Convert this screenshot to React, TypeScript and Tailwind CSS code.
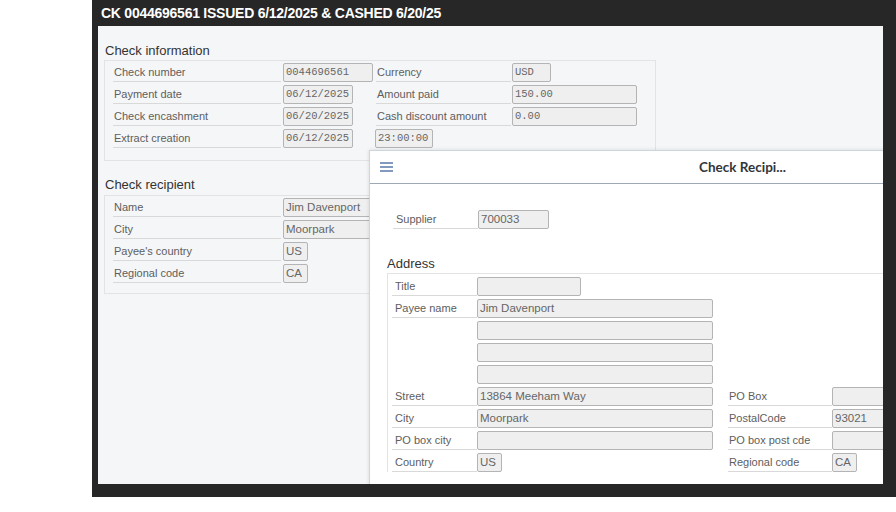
const Field = ({ v = "", w, mono = false }: { v?: string; w: string; mono?: boolean }) => (
  <div
    className={`${w} h-[19px] shrink-0 flex items-center px-[2px] border border-[#b4b4b4] rounded-[2px] bg-[#efefef] text-[#666] overflow-hidden whitespace-nowrap ${
      mono ? "font-['Liberation_Mono',monospace] text-[10.5px]" : "text-[11.5px]"
    }`}
  >
    {v}
  </div>
);

const Label = ({ t = "", w, line = true, pad = "pl-[1px]" }: { t?: string; w: string; line?: boolean; pad?: string }) => (
  <div
    className={`${w} ${pad} h-[19px] shrink-0 flex items-center text-[11px] text-[#5e5e5e] whitespace-nowrap ${
      line ? "border-b border-[#d9d9d9]" : ""
    }`}
  >
    {t}
  </div>
);

const info = [
  { l: "Check number", v: "0044696561", w: "w-[90px]", l2: "Currency", v2: "USD", w2: "w-[39px]" },
  { l: "Payment date", v: "06/12/2025", w: "w-[70px]", l2: "Amount paid", v2: "150.00", w2: "w-[125px]" },
  { l: "Check encashment", v: "06/20/2025", w: "w-[70px]", l2: "Cash discount amount", v2: "0.00", w2: "w-[125px]" },
  { l: "Extract creation", v: "06/12/2025", w: "w-[70px]", l2: "", v2: "", w2: "" },
];

const recipient = [
  { l: "Name", v: "Jim Davenport", w: "w-[110px]" },
  { l: "City", v: "Moorpark", w: "w-[110px]" },
  { l: "Payee's country", v: "US", w: "w-[25px]" },
  { l: "Regional code", v: "CA", w: "w-[25px]" },
];

const address = [
  { l: "Title", v: "", w: "w-[104px]", line: true },
  { l: "Payee name", v: "Jim Davenport", w: "w-[236px]", line: true },
  { l: "", v: "", w: "w-[236px]", line: false },
  { l: "", v: "", w: "w-[236px]", line: false },
  { l: "", v: "", w: "w-[236px]", line: false },
  { l: "Street", v: "13864 Meeham Way", w: "w-[236px]", line: true, r: "PO Box", rv: "", rw: "w-[60px]" },
  { l: "City", v: "Moorpark", w: "w-[236px]", line: true, r: "PostalCode", rv: "93021", rw: "w-[60px]" },
  { l: "PO box city", v: "", w: "w-[236px]", line: true, r: "PO box post cde", rv: "", rw: "w-[60px]" },
  { l: "Country", v: "US", w: "w-[25px]", line: true, r: "Regional code", rv: "CA", rw: "w-[25px]" },
];

export default function App() {
  return (
    <div className="w-[896px] h-[512px] bg-white font-['Liberation_Sans',Arial,sans-serif]">
      <div className="ml-[92px] w-[804px] h-[497px] bg-[#272727] flex flex-col">
        <div className="h-[26px] flex items-center pl-[9px] text-white text-[14px] font-bold tracking-[-0.25px]">
          CK 0044696561 ISSUED 6/12/2025 &amp; CASHED 6/20/25
        </div>

        <div className="relative ml-[6px] mr-[13px] h-[458px] bg-[#f5f6f7] overflow-hidden px-[6px] pt-[17px]">
          <div className="pl-[1px] h-[16px] leading-[16px] text-[13px] text-[#333]">Check information</div>
          <div className="mt-[1px] w-[552px] h-[101px] border border-[#e3e3e3] pt-[2px] pl-[8px] flex flex-col gap-[3px]">
            {info.map((r) => (
              <div key={r.l} className="flex h-[19px]">
                <Label t={r.l} w="w-[168px]" />
                <div className="w-[95px] shrink-0 pl-[2px]">
                  <Field v={r.v} w={r.w} mono />
                </div>
                {r.l2 ? (
                  <>
                    <Label t={r.l2} w="w-[135px]" />
                    <div className="pl-[1px]">
                      <Field v={r.v2} w={r.w2} mono />
                    </div>
                  </>
                ) : (
                  <div className="-ml-[1px]">
                    <Field v="23:00:00" w="w-[58px]" mono />
                  </div>
                )}
              </div>
            ))}
          </div>

          <div className="mt-[16px] pl-[1px] h-[16px] leading-[16px] text-[13px] text-[#333]">Check recipient</div>
          <div className="mt-[2px] w-[552px] h-[99px] border border-[#e3e3e3] pt-[2px] pl-[8px] flex flex-col gap-[3px]">
            {recipient.map((r) => (
              <div key={r.l} className="flex h-[19px]">
                <Label t={r.l} w="w-[168px]" />
                <div className="pl-[2px]">
                  <Field v={r.v} w={r.w} />
                </div>
              </div>
            ))}
          </div>

          {/* Check Recipient dialog */}
          <div className="absolute left-[271px] top-[124px] w-[746px] h-[400px] bg-white border-l border-t border-[#cdd5de] shadow-[0_0_4px_rgba(0,0,0,0.12)]">
            <div className="h-[33px] border-b border-[#9ea9b5] grid grid-cols-[1fr_auto_1fr] items-center">
              <div className="pl-[10px]">
                <svg width="13" height="10" viewBox="0 0 13 10">
                  <path d="M0 1h13M0 5h13M0 9h13" stroke="#5a7aa8" strokeWidth="1.5" />
                </svg>
              </div>
              <div className="font-['Lato',sans-serif] font-bold text-[13.5px] text-[#32363a]">Check Recipi...</div>
              <div />
            </div>

            <div className="pl-[17px] pt-[26px]">
              <div className="flex pl-[6px]">
                <Label t="Supplier" w="w-[85px]" pad="pl-[3px]" />
                <Field v="700033" w="w-[71px]" />
              </div>

              <div className="mt-[27px] h-[16px] leading-[16px] text-[13px] text-[#333]">Address</div>
              <div className="mt-[1px] border-t border-l border-[#e3e3e3] pt-[3px] pl-[4px] flex flex-col gap-[3px]">
                {address.map((r, i) => (
                  <div key={i} className="flex h-[19px]">
                    <Label t={r.l} w="w-[85px]" line={r.line} pad="pl-[3px]" />
                    <div className="w-[236px] shrink-0">
                      <Field v={r.v} w={r.w} />
                    </div>
                    {r.r && (
                      <>
                        <div className="ml-[15px]">
                          <Label t={r.r} w="w-[104px]" />
                        </div>
                        <Field v={r.rv} w={r.rw} />
                      </>
                    )}
                  </div>
                ))}
              </div>
            </div>
          </div>
        </div>
      </div>
    </div>
  );
}
